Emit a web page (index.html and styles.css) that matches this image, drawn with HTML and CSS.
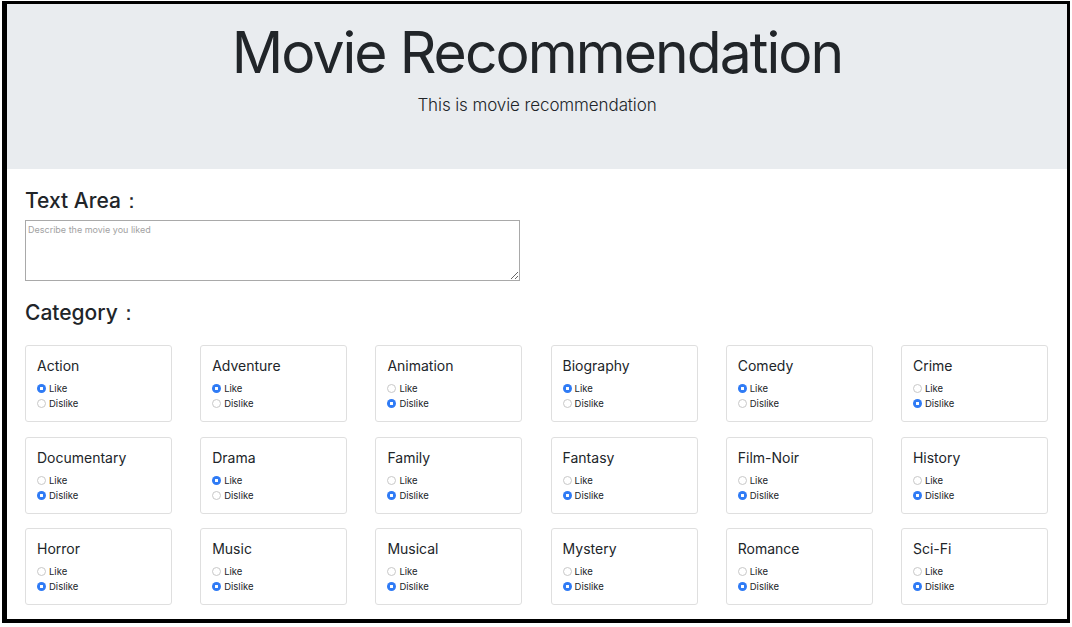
FILE: index.html
```html
<!DOCTYPE html>
<html lang="en">
<head>
<meta charset="utf-8">
<title>Movie Recommendation</title>
<link rel="stylesheet" href="styles.css">
</head>
<body>
<div class="frame">
  <header class="jumbotron">
    <h1 class="title">Movie Recommendation</h1>
    <p class="lead">This is movie recommendation</p>
  </header>
  <main class="content">
    <h4 class="section-title first">Text Area：</h4>
    <textarea class="describe" placeholder="Describe the movie you liked"></textarea>
    <h4 class="section-title">Category：</h4>
    <div class="grid">
      <div class="card"><div class="card-title">Action</div><label class="opt"><input type="radio" name="c1" checked>Like</label><label class="opt"><input type="radio" name="c1">Dislike</label></div>
      <div class="card"><div class="card-title">Adventure</div><label class="opt"><input type="radio" name="c2" checked>Like</label><label class="opt"><input type="radio" name="c2">Dislike</label></div>
      <div class="card"><div class="card-title">Animation</div><label class="opt"><input type="radio" name="c3">Like</label><label class="opt"><input type="radio" name="c3" checked>Dislike</label></div>
      <div class="card"><div class="card-title">Biography</div><label class="opt"><input type="radio" name="c4" checked>Like</label><label class="opt"><input type="radio" name="c4">Dislike</label></div>
      <div class="card"><div class="card-title">Comedy</div><label class="opt"><input type="radio" name="c5" checked>Like</label><label class="opt"><input type="radio" name="c5">Dislike</label></div>
      <div class="card"><div class="card-title">Crime</div><label class="opt"><input type="radio" name="c6">Like</label><label class="opt"><input type="radio" name="c6" checked>Dislike</label></div>
      <div class="card"><div class="card-title">Documentary</div><label class="opt"><input type="radio" name="c7">Like</label><label class="opt"><input type="radio" name="c7" checked>Dislike</label></div>
      <div class="card"><div class="card-title">Drama</div><label class="opt"><input type="radio" name="c8" checked>Like</label><label class="opt"><input type="radio" name="c8">Dislike</label></div>
      <div class="card"><div class="card-title">Family</div><label class="opt"><input type="radio" name="c9">Like</label><label class="opt"><input type="radio" name="c9" checked>Dislike</label></div>
      <div class="card"><div class="card-title">Fantasy</div><label class="opt"><input type="radio" name="c10">Like</label><label class="opt"><input type="radio" name="c10" checked>Dislike</label></div>
      <div class="card"><div class="card-title">Film-Noir</div><label class="opt"><input type="radio" name="c11">Like</label><label class="opt"><input type="radio" name="c11" checked>Dislike</label></div>
      <div class="card"><div class="card-title">History</div><label class="opt"><input type="radio" name="c12">Like</label><label class="opt"><input type="radio" name="c12" checked>Dislike</label></div>
      <div class="card"><div class="card-title">Horror</div><label class="opt"><input type="radio" name="c13">Like</label><label class="opt"><input type="radio" name="c13" checked>Dislike</label></div>
      <div class="card"><div class="card-title">Music</div><label class="opt"><input type="radio" name="c14">Like</label><label class="opt"><input type="radio" name="c14" checked>Dislike</label></div>
      <div class="card"><div class="card-title">Musical</div><label class="opt"><input type="radio" name="c15">Like</label><label class="opt"><input type="radio" name="c15" checked>Dislike</label></div>
      <div class="card"><div class="card-title">Mystery</div><label class="opt"><input type="radio" name="c16">Like</label><label class="opt"><input type="radio" name="c16" checked>Dislike</label></div>
      <div class="card"><div class="card-title">Romance</div><label class="opt"><input type="radio" name="c17">Like</label><label class="opt"><input type="radio" name="c17" checked>Dislike</label></div>
      <div class="card"><div class="card-title">Sci-Fi</div><label class="opt"><input type="radio" name="c18">Like</label><label class="opt"><input type="radio" name="c18" checked>Dislike</label></div>
    </div>
  </main>
</div>
</body>
</html>
```

FILE: styles.css
```css
* { box-sizing: border-box; }
html, body { margin: 0; padding: 0; background: #fff; }
body {
  font-family: Inter, "Liberation Sans", Arial, sans-serif;
  color: #212529;
  overflow: hidden;
}
.frame {
  margin: 1px 0 0 2px;
  width: 1068px;
  height: 622px;
  border-style: solid;
  border-color: #000;
  border-width: 3px 3px 4px 5px;
  overflow: hidden;
  background: #fff;
}
.jumbotron {
  background: #e9ecef;
  height: 165px;
  text-align: center;
  padding-top: 16px;
}
.title {
  margin: 0;
  font-size: 57px;
  line-height: 66px;
  font-weight: 400;
  letter-spacing: -1.95px;
  color: #212529;
}
.lead {
  margin: 8px 0 0;
  font-size: 17px;
  line-height: 22px;
  font-weight: 300;
  letter-spacing: -0.1px;
  color: #212529;
}
.content {
  padding: 0 19px 0 18px;
}
.section-title {
  margin: 19px 0 0;
  font-size: 21px;
  line-height: 26px;
  font-weight: 500;
  color: #212529;
}
.describe {
  display: block;
  margin-top: 6px;
  width: 495px;
  height: 61px;
  border: 1px solid #a9a9a9;
  border-radius: 0;
  padding: 3px 2px;
  font-family: inherit;
  font-size: 9px;
  resize: both;
  background: #fff;
}
.describe::placeholder { color: #a2a2a2; }
.grid {
  margin-top: 19px;
  display: grid;
  grid-template-columns: repeat(6, 147px);
  column-gap: 28.2px;
  row-gap: 14.5px;
}
.card {
  height: 77px;
  border: 1px solid #dfdfdf;
  border-radius: 3px;
  padding: 11px 11px 0;
  display: flex;
  flex-direction: column;
}
.card-title {
  font-size: 14px;
  line-height: 18px;
  font-weight: 400;
  margin-bottom: 6px;
}
.opt {
  display: flex;
  align-items: center;
  font-size: 9.5px;
  line-height: 15px;
  color: #212529;
}
.opt input {
  -webkit-appearance: none;
  appearance: none;
  width: 9px;
  height: 9px;
  margin: 0 3px 0 0;
  border-radius: 50%;
  border: 1px solid #c8c8c8;
  background: #fff;
}
.opt input:checked {
  border: none;
  background: radial-gradient(circle, #fff 0 1.4px, #2f7bf5 1.9px);
}
```
